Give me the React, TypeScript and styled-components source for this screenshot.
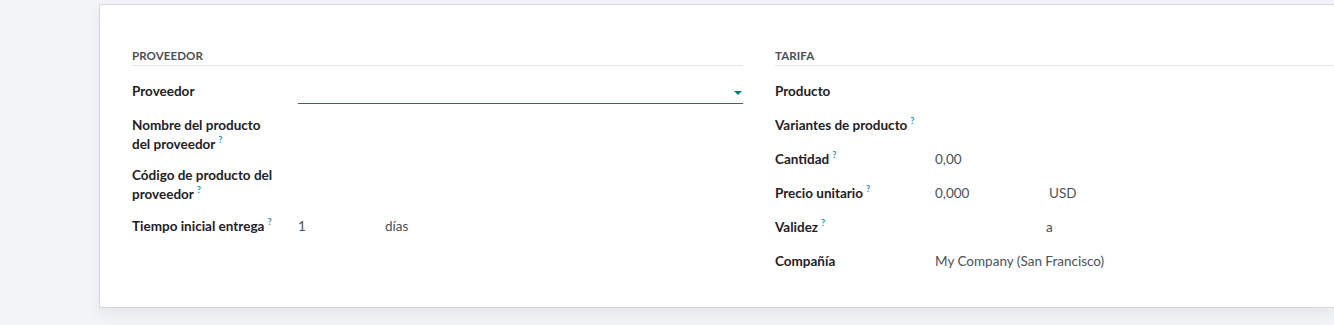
import React from "react";
import styled, { createGlobalStyle } from "styled-components";

const GlobalStyle = createGlobalStyle`
  html, body {
    margin: 0;
    padding: 0;
    background: #f3f4f7;
    overflow: hidden;
  }
  body {
    font-family: Lato, "Open Sans", sans-serif;
    font-size: 13.5px;
    color: #212529;
  }
`;

const Page = styled.div`
  padding: 4px 0 0 99px;
  height: 325px;
  box-sizing: border-box;
`;

const Sheet = styled.div`
  width: 1235px;
  height: 304px;
  box-sizing: border-box;
  overflow: hidden;
  background: #fff;
  border: 1px solid #d5d7db;
  border-right: none;
  box-shadow: 0 6px 14px rgba(0, 0, 0, 0.06);
  padding: 43px 0 0 32px;
  display: grid;
  grid-template-columns: 611px 611px;
  column-gap: 32px;
  align-items: start;
`;

const Group = styled.section`
  display: flex;
  flex-direction: column;
`;

const GroupTitle = styled.h3`
  margin: 0 0 14px;
  padding-bottom: 2px;
  border-bottom: 1px solid #e2e4e7;
  font-size: 11.5px;
  font-weight: 700;
  letter-spacing: 0.1px;
  text-transform: uppercase;
  color: #4a4f57;
  line-height: 15px;
`;

const Rows = styled.div<{ $label: number }>`
  display: grid;
  grid-template-columns: ${(p) => p.$label}px 1fr;
  row-gap: 11px;
`;

const Label = styled.div<{ $multi?: boolean }>`
  padding: ${(p) => (p.$multi ? "1px 8px 1px 0" : "2px 8px 2px 0")};
  line-height: ${(p) => (p.$multi ? "18.5px" : "19px")};
  font-weight: 700;
  color: #1e2126;
`;

const Help = styled.span`
  display: inline-block;
  margin-left: 3px;
  font-size: 9px;
  line-height: 0;
  font-weight: 700;
  color: #1a93b8;
  vertical-align: 6px;
`;

const Value = styled.div`
  display: flex;
  align-items: center;
  min-height: 23px;
  line-height: 19px;
  color: #4b515b;
`;

const Field = styled.span<{ $w?: number }>`
  display: inline-block;
  width: ${(p) => (p.$w ? `${p.$w}px` : "auto")};
  flex: none;
`;

const Select = styled.div`
  flex: 1;
  height: 24px;
  box-sizing: border-box;
  border-bottom: 1px solid #017e84;
  display: flex;
  align-items: center;
  justify-content: flex-end;
  padding-right: 1px;
`;

const Caret = styled.span`
  width: 0;
  height: 0;
  border-left: 4px solid transparent;
  border-right: 4px solid transparent;
  border-top: 4px solid #017e84;
  margin-top: 2px;
`;

const L = ({
  text,
  help,
  multi,
}: {
  text: React.ReactNode;
  help?: boolean;
  multi?: boolean;
}) => (
  <Label $multi={multi}>
    {text}
    {help && <Help>?</Help>}
  </Label>
);

export default function App() {
  return (
    <>
      <GlobalStyle />
      <Page>
        <Sheet>
          <Group>
            <GroupTitle>Proveedor</GroupTitle>
            <Rows $label={166}>
              <L text="Proveedor" />
              <Value>
                <Select>
                  <Caret />
                </Select>
              </Value>

              <L
                multi
                text={
                  <>
                    Nombre del producto
                    <br />
                    del proveedor
                  </>
                }
                help
              />
              <Value />

              <L
                multi
                text={
                  <>
                    Código de producto del
                    <br />
                    proveedor
                  </>
                }
                help
              />
              <Value />

              <L text="Tiempo inicial entrega" help />
              <Value>
                <Field $w={87}>1</Field>
                <Field>días</Field>
              </Value>
            </Rows>
          </Group>

          <Group>
            <GroupTitle>Tarifa</GroupTitle>
            <Rows $label={160}>
              <L text="Producto" />
              <Value />

              <L text="Variantes de producto" help />
              <Value />

              <L text="Cantidad" help />
              <Value>0,00</Value>

              <L text="Precio unitario" help />
              <Value>
                <Field $w={114}>0,000</Field>
                <Field>USD</Field>
              </Value>

              <L text="Validez" help />
              <Value>
                <Field $w={111} />
                <Field>a</Field>
              </Value>

              <L text="Compañía" />
              <Value>My Company (San Francisco)</Value>
            </Rows>
          </Group>
        </Sheet>
      </Page>
    </>
  );
}
